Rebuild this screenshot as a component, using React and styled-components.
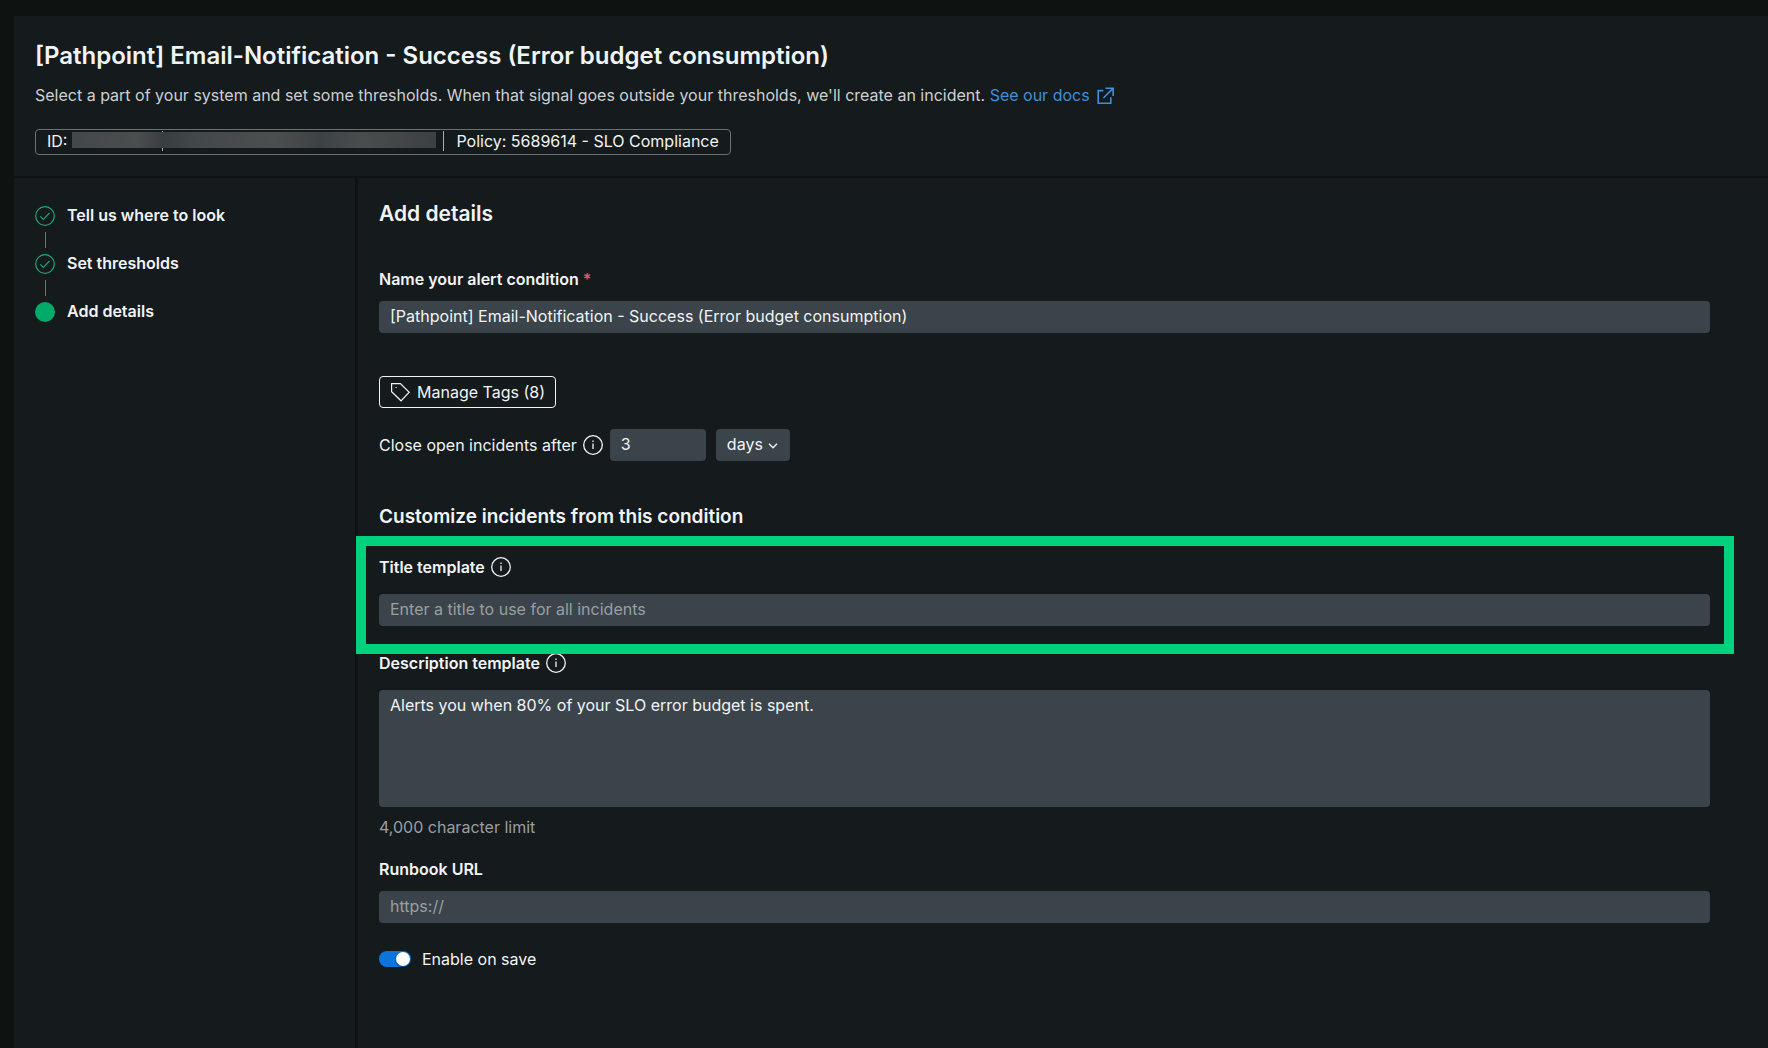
import React, { useState } from "react";
import styled, { createGlobalStyle } from "styled-components";

const GlobalStyle = createGlobalStyle`
  *, *::before, *::after { box-sizing: border-box; }
  body {
    margin: 0;
    background: #0e1312;
    color: #f1f4f4;
    font-family: Inter, "Liberation Sans", sans-serif;
    font-size: 16px;
    line-height: 24px;
  }
  h1, h2, h3, p, ol { margin: 0; padding: 0; }
  button, input, select, textarea { font: inherit; color: inherit; }
`;

const Page = styled.div`
  display: flex;
  min-height: 100vh;
  padding: 16px 0 0 14px;
`;

const Panel = styled.div`
  flex: 1;
  min-width: 0;
  display: flex;
  flex-direction: column;
  background: #151a1d;
`;

const Header = styled.header`
  display: flex;
  flex-direction: column;
  align-items: flex-start;
  padding: 24px 21px 21px;
  border-bottom: 2px solid #0e1214;
`;

const Title = styled.h1`
  font-size: 24px;
  line-height: 32px;
  font-weight: 600;
`;

const Intro = styled.p`
  margin-top: 11px;
  color: #cdd0d0;
`;

const DocsLink = styled.a`
  color: #3f8fdb;
  text-decoration: none;
  svg { margin-left: 1px; vertical-align: -5px; }
`;

const Meta = styled.div`
  display: flex;
  align-items: center;
  height: 26px;
  margin-top: 22px;
  padding: 0 11px 2px;
  border: 1px solid #6a7274;
  border-radius: 4px;
`;

const Redacted = styled.span`
  width: 364px;
  height: 20px;
  margin-left: 5px;
  background:
    linear-gradient(90deg, #43484a 0%, #4a4e4f 18%, #383d40 25%, #43484a 34%, #4b4f50 56%, #3d4244 68%, #494d4e 80%, #3b4042 100%) 0 1px / 100% 16px no-repeat,
    linear-gradient(#a9adae, #a9adae) 90px 0 / 1px 20px no-repeat;
`;

const Divider = styled.span`
  width: 1px;
  height: 20px;
  margin: 0 12px 0 7px;
  background: #a9adae;
`;

const Body = styled.div`
  flex: 1;
  display: flex;
`;

const Sidebar = styled.nav`
  flex: none;
  width: 344px;
  padding: 28px 21px;
  border-right: 3px solid #0e1214;
`;

const Steps = styled.ol`
  display: flex;
  flex-direction: column;
  gap: 6px;
  list-style: none;
`;

const Step = styled.li`
  display: flex;
  align-items: center;
  gap: 12px;
`;

const StepText = styled.span`
  padding-bottom: 2px;
  line-height: 18px;
  font-weight: 600;
`;

const Connector = styled.li`
  width: 1px;
  height: 16px;
  margin-left: 10px;
  background: #1f9c6a;
`;

const Dot = styled.span`
  width: 20px;
  height: 20px;
  border-radius: 50%;
  background: #00ab69;
`;

const Content = styled.main`
  flex: 1;
  min-width: 0;
  display: flex;
  flex-direction: column;
  align-items: flex-start;
  padding: 22px 58px 40px 21px;
`;

const SectionTitle = styled.h2`
  font-size: 21px;
  line-height: 28px;
  font-weight: 600;
`;

const SubTitle = styled.h3`
  margin-top: 44px;
  font-size: 19px;
  line-height: 24px;
  font-weight: 600;
`;

const Field = styled.div`
  position: relative;
  width: 100%;
  display: flex;
  flex-direction: column;
  gap: ${(p) => p.$gap || 10}px;
  margin-top: ${(p) => p.$top}px;
`;

const Highlight = styled.span`
  position: absolute;
  z-index: 1;
  inset: -19px -24px -28px -23px;
  border: 10px solid #00d17c;
  pointer-events: none;
`;

const LabelRow = styled.div`
  display: flex;
  align-items: center;
  gap: 6px;
`;

const Label = styled.label`
  font-weight: ${(p) => (p.$plain ? 400 : 600)};
`;

const Required = styled.span`
  color: #e8594f;
`;

const InfoButton = styled.button`
  display: flex;
  padding: 0;
  border: 0;
  background: none;
`;

const TextInput = styled.input`
  width: ${(p) => p.$width || "100%"};
  height: 32px;
  padding: 0 11px 2px;
  border: 0;
  border-radius: 4px;
  background: #3b444b;
  &::placeholder { color: #9a9fa1; opacity: 1; }
`;

const TextArea = styled.textarea`
  display: block;
  width: 100%;
  height: 117px;
  padding: 3px 11px;
  border: 0;
  border-radius: 4px;
  background: #3b444b;
  resize: none;
`;

const Hint = styled.p`
  margin-top: 8px;
  color: #9a9fa1;
`;

const TagsButton = styled.button`
  display: flex;
  align-items: center;
  gap: 7px;
  height: 32px;
  margin-top: 43px;
  padding: 0 10px 1px;
  border: 1px solid #f1f4f4;
  border-radius: 4px;
  background: none;
`;

const CloseRow = styled.div`
  display: flex;
  align-items: center;
  gap: 10px;
  margin-top: 21px;
`;

const CloseLabel = styled(LabelRow)`
  margin-right: -3px;
`;

const SelectBox = styled.div`
  position: relative;
  svg {
    position: absolute;
    right: 12px;
    top: 13px;
    pointer-events: none;
  }
`;

const Select = styled.select`
  display: block;
  width: 74px;
  height: 32px;
  padding: 0 0 2px 11px;
  border: 0;
  border-radius: 4px;
  background: #3b444b;
  appearance: none;
`;

const ToggleLabel = styled.label`
  display: flex;
  align-items: center;
  gap: 11px;
  margin-top: 24px;
`;

const Toggle = styled.input`
  appearance: none;
  display: flex;
  align-items: center;
  justify-content: flex-start;
  width: 32px;
  height: 16px;
  margin: 0;
  padding: 0 1px;
  border-radius: 8px;
  background: #3b444b;
  &::before {
    content: "";
    width: 14px;
    height: 14px;
    border-radius: 50%;
    background: #fff;
    box-shadow: 0 1px 2px rgba(0, 0, 0, 0.5);
  }
  &:checked {
    justify-content: flex-end;
    background: #0c74df;
  }
`;

const InfoIcon = () => (
  <svg width="20" height="20" viewBox="0 0 20 20" fill="none" stroke="#f1f4f4" strokeWidth="1.3" aria-hidden="true">
    <circle cx="10" cy="10" r="9.3" />
    <path d="M10 8.4V14M10 5.6V7" />
  </svg>
);

const Info = ({ about }) => (
  <InfoButton type="button" aria-label={about}>
    <InfoIcon />
  </InfoButton>
);

const CheckIcon = () => (
  <svg width="20" height="20" viewBox="0 0 20 20" fill="none" stroke="#1fa871" strokeWidth="1.2" aria-hidden="true">
    <circle cx="10" cy="10" r="9.3" />
    <path d="M5.3 10.4 8.3 13.4 14.6 6.9" />
  </svg>
);

const ExternalIcon = () => (
  <svg width="20" height="20" viewBox="0 0 20 20" fill="none" stroke="currentColor" strokeWidth="1.6" aria-hidden="true">
    <path d="M8.4 4.6H3.2V17.2H15.8V11.2M10.4 2.2H18.2V10M18 2.4 8.4 12" />
  </svg>
);

const TagIcon = () => (
  <svg width="20" height="20" viewBox="0 0 20 20" fill="none" stroke="currentColor" strokeWidth="1.2" aria-hidden="true">
    <path d="M1.6 1.6H10.4L19.2 10.2 11 18.8 1.6 9.8Z" />
    <path d="M5.5 5.5H6.7" />
  </svg>
);

const ChevronIcon = () => (
  <svg width="10" height="8" viewBox="0 0 10 8" fill="none" stroke="#f1f4f4" strokeWidth="1.4" aria-hidden="true">
    <path d="M1 1.8 5 5.8 9 1.8" />
  </svg>
);

export default function App() {
  const [name, setName] = useState("[Pathpoint] Email-Notification - Success (Error budget consumption)");
  const [amount, setAmount] = useState("3");
  const [description, setDescription] = useState("Alerts you when 80% of your SLO error budget is spent.");
  const [enabled, setEnabled] = useState(true);

  return (
    <>
      <GlobalStyle />
      <Page>
        <Panel>
          <Header>
            <Title>[Pathpoint] Email-Notification - Success (Error budget consumption)</Title>
            <Intro>
              Select a part of your system and set some thresholds. When that signal goes outside your
              thresholds, we'll create an incident.{" "}
              <DocsLink href="#docs">
                See our docs <ExternalIcon />
              </DocsLink>
            </Intro>
            <Meta>
              <span>ID:</span>
              <Redacted />
              <Divider />
              <span>Policy: 5689614 - SLO Compliance</span>
            </Meta>
          </Header>
          <Body>
            <Sidebar>
              <Steps>
                <Step><CheckIcon /><StepText>Tell us where to look</StepText></Step>
                <Connector aria-hidden="true" />
                <Step><CheckIcon /><StepText>Set thresholds</StepText></Step>
                <Connector aria-hidden="true" />
                <Step aria-current="step"><Dot /><StepText>Add details</StepText></Step>
              </Steps>
            </Sidebar>
            <Content>
              <SectionTitle>Add details</SectionTitle>
              <Field $top={39}>
                <Label htmlFor="name">
                  Name your alert condition <Required>*</Required>
                </Label>
                <TextInput id="name" value={name} onChange={(e) => setName(e.target.value)} />
              </Field>
              <TagsButton type="button">
                <TagIcon />
                Manage Tags (8)
              </TagsButton>
              <CloseRow>
                <CloseLabel>
                  <Label $plain htmlFor="amount">Close open incidents after</Label>
                  <Info about="About closing incidents" />
                </CloseLabel>
                <TextInput id="amount" $width="96px" value={amount} onChange={(e) => setAmount(e.target.value)} />
                <SelectBox>
                  <Select aria-label="Time unit" defaultValue="days">
                    <option>days</option>
                  </Select>
                  <ChevronIcon />
                </SelectBox>
              </CloseRow>
              <SubTitle>Customize incidents from this condition</SubTitle>
              <Field $top={26} $gap={15}>
                <LabelRow>
                  <Label htmlFor="title">Title template</Label>
                  <Info about="About the title template" />
                </LabelRow>
                <TextInput id="title" placeholder="Enter a title to use for all incidents" />
                <Highlight />
              </Field>
              <Field $top={25} $gap={15}>
                <LabelRow>
                  <Label htmlFor="description">Description template</Label>
                  <Info about="About the description template" />
                </LabelRow>
                <TextArea id="description" value={description} onChange={(e) => setDescription(e.target.value)} />
              </Field>
              <Hint>4,000 character limit</Hint>
              <Field $top={18}>
                <Label htmlFor="runbook">Runbook URL</Label>
                <TextInput id="runbook" placeholder="https://" />
              </Field>
              <ToggleLabel>
                <Toggle type="checkbox" role="switch" checked={enabled} onChange={(e) => setEnabled(e.target.checked)} />
                Enable on save
              </ToggleLabel>
            </Content>
          </Body>
        </Panel>
      </Page>
    </>
  );
}
